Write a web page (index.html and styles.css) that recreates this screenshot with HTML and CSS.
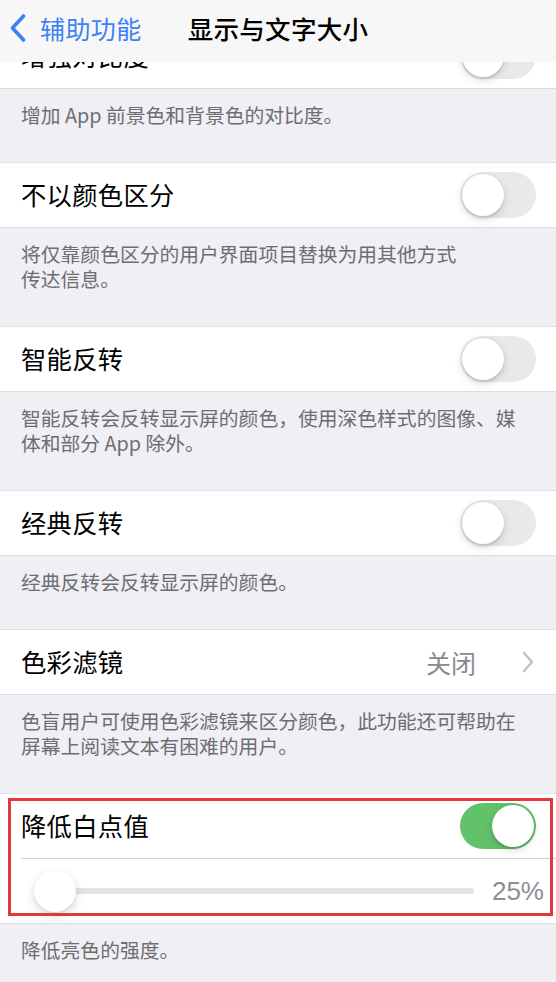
FILE: index.html
```html
<!DOCTYPE html>
<html lang="zh-CN">
<head>
<meta charset="utf-8">
<title>显示与文字大小</title>
<link rel="stylesheet" href="styles.css">
</head>
<body>
<header class="navbar">
  <div class="nav-back">
    <svg class="nav-chevron" width="16" height="28" viewBox="0 0 16 28"><path d="M13.5 2 L2.5 14 L13.5 26" fill="none" stroke="#3b82f6" stroke-width="3.6" stroke-linecap="round" stroke-linejoin="round"/></svg>
    <span class="nav-back-label">辅助功能</span>
  </div>
  <div class="nav-title">显示与文字大小</div>
  <div></div>
</header>

<main class="settings">
  <section class="group">
    <div class="row">
      <span class="label">增强对比度</span>
      <span class="switch"><span class="knob"></span></span>
    </div>
  </section>
  <p class="footer">增加 App 前景色和背景色的对比度。</p>

  <section class="group">
    <div class="row">
      <span class="label">不以颜色区分</span>
      <span class="switch"><span class="knob"></span></span>
    </div>
  </section>
  <p class="footer">将仅靠颜色区分的用户界面项目替换为用其他方式<br>传达信息。</p>

  <section class="group">
    <div class="row">
      <span class="label">智能反转</span>
      <span class="switch"><span class="knob"></span></span>
    </div>
  </section>
  <p class="footer">智能反转会反转显示屏的颜色，使用深色样式的图像、媒<br>体和部分 App 除外。</p>

  <section class="group">
    <div class="row">
      <span class="label">经典反转</span>
      <span class="switch"><span class="knob"></span></span>
    </div>
  </section>
  <p class="footer">经典反转会反转显示屏的颜色。</p>

  <section class="group">
    <div class="row">
      <span class="label">色彩滤镜</span>
      <span class="detail">
        <span class="value">关闭</span>
        <svg class="disclosure" width="12" height="22" viewBox="0 0 12 22"><path d="M2 2 L10 11 L2 20" fill="none" stroke="#c4c4c8" stroke-width="2.6" stroke-linecap="round" stroke-linejoin="round"/></svg>
      </span>
    </div>
  </section>
  <p class="footer">色盲用户可使用色彩滤镜来区分颜色，此功能还可帮助在<br>屏幕上阅读文本有困难的用户。</p>

  <section class="group group-marked">
    <div class="row">
      <span class="label">降低白点值</span>
      <span class="switch on"><span class="knob"></span></span>
    </div>
    <div class="row-divider"></div>
    <div class="row slider-row">
      <div class="slider">
        <div class="slider-track"></div>
        <div class="slider-thumb"></div>
      </div>
      <span class="slider-value">25%</span>
    </div>
    <div class="highlight-box"></div>
  </section>
  <p class="footer">降低亮色的强度。</p>
</main>
</body>
</html>
```

FILE: styles.css
```css
* {
  box-sizing: border-box;
}

html, body {
  margin: 0;
  padding: 0;
}

body {
  width: 556px;
  min-height: 982px;
  background: #efeff4;
  font-family: "Noto Sans CJK SC", "Noto Sans", sans-serif;
  color: #000;
  overflow: hidden;
}

/* Navigation bar pinned over the scrolled list */
.navbar {
  position: fixed;
  top: 0;
  left: 0;
  width: 556px;
  height: 62px;
  padding-bottom: 6px;
  background: #f7f7f7;
  display: grid;
  grid-template-columns: 1fr auto 1fr;
  align-items: center;
  z-index: 10;
}

.nav-back {
  display: flex;
  align-items: center;
  gap: 14px;
  padding-left: 10px;
}

.nav-chevron {
  display: block;
}

.nav-back-label {
  font-size: 25px;
  color: #3b82f6;
  line-height: 1;
  letter-spacing: 0.4px;
}

.nav-title {
  font-size: 25.5px;
  font-weight: 500;
  line-height: 1;
  letter-spacing: 0.3px;
}

/* List */
.settings {
  padding-top: 23px;
}

.group {
  background: #fff;
  border-top: 1px solid #e2e2e6;
  border-bottom: 1px solid #dcdce0;
}

.row {
  height: 64px;
  display: flex;
  align-items: center;
  justify-content: space-between;
  padding: 0 20px 0 21px;
}

.label {
  font-size: 25.3px;
  line-height: 1;
  letter-spacing: 0.3px;
}

.footer {
  margin: 0;
  padding: 13px 21px 35px 21px;
  font-size: 19.8px;
  line-height: 25px;
  color: #6d6d72;
}

/* Toggle switch */
.switch {
  position: relative;
  width: 76px;
  height: 46px;
  border-radius: 23px;
  background: #e9e9eb;
  flex: none;
}

.switch .knob {
  position: absolute;
  top: 2px;
  left: 2px;
  width: 42px;
  height: 42px;
  border-radius: 50%;
  background: #fff;
  box-shadow: 0 3px 8px rgba(0, 0, 0, 0.15), 0 3px 1px rgba(0, 0, 0, 0.06), 0 0 0 0.5px rgba(0, 0, 0, 0.04);
}

.switch.on {
  background: #62c26a;
}

.switch.on .knob {
  left: 32px;
}

/* Disclosure detail */
.detail {
  display: flex;
  align-items: center;
  gap: 46px;
  margin-right: 2px;
}

.value {
  font-size: 25px;
  line-height: 1;
  color: #8a8a8e;
}

.disclosure {
  display: block;
}

/* Slider group */
.group-marked {
  position: relative;
}

.row-divider {
  height: 1px;
  margin-left: 21px;
  background: #d0d0d4;
}

.slider-row {
  padding: 0 12px 0 34px;
  gap: 18px;
}

.slider {
  position: relative;
  flex: 1;
  height: 42px;
  display: flex;
  align-items: center;
}

.slider-track {
  width: 100%;
  height: 6px;
  border-radius: 3px;
  background: #e3e3e6;
}

.slider-thumb {
  position: absolute;
  left: 0;
  top: 0;
  width: 42px;
  height: 42px;
  border-radius: 50%;
  background: #fff;
  box-shadow: 0 4px 10px rgba(0, 0, 0, 0.16), 0 1px 2px rgba(0, 0, 0, 0.06);
}

.slider-value {
  font-family: "Liberation Sans", Arial, sans-serif;
  font-size: 26px;
  color: #8e8e93;
  line-height: 1;
}

/* Red annotation frame drawn over the group */
.highlight-box {
  position: absolute;
  top: 4px;
  left: 8px;
  right: 3px;
  bottom: 7px;
  border: 3px solid #e0383c;
  pointer-events: none;
}
```
